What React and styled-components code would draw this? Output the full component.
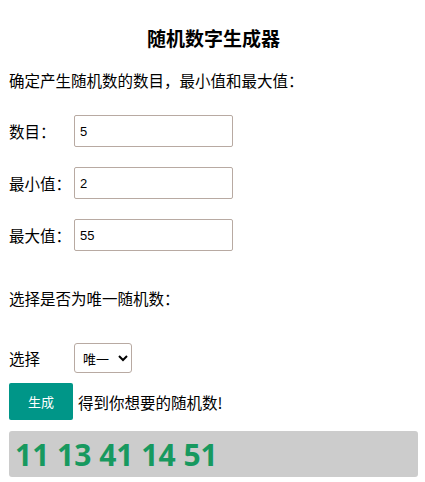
import React, {useState} from "react";
import styled, {createGlobalStyle} from 'styled-components'

const GlobalStyle = createGlobalStyle`
  body {
    margin: 0;
    background: #fff;
    font-family: "Noto Sans CJK SC", "Noto Sans", sans-serif;
    color: #000;
  }
`

const Page = styled.div`
  padding: 0 7px 4px 9px;
  display: flex;
  flex-direction: column;
`

const Title = styled.h3`
  margin: 24px 0 0;
  font-size: 19px;
  line-height: 28px;
  font-weight: 700;
  text-align: center;
`

const Text = styled.p`
  margin: ${p => p.$top}px 0 0;
  font-size: 15.5px;
  line-height: 18px;
`

const Row = styled.div`
  display: flex;
  align-items: center;
  margin-top: ${p => p.$top}px;
  height: ${p => p.$h || 32}px;
`

const Label = styled.label`
  width: 65px;
  font-size: 15.5px;
  line-height: 18px;
`

const Input = styled.input`
  box-sizing: border-box;
  width: 159px;
  height: 32px;
  border: 1px solid #b8aaa2;
  border-radius: 2px;
  padding: 0 5px;
  font-family: "Liberation Sans", Arial, sans-serif;
  font-size: 13px;
  outline: none;
`

const Select = styled.select`
  box-sizing: border-box;
  width: 58px;
  height: 30px;
  border: 1px solid #b8aaa2;
  border-radius: 3px;
  background: #fff;
  font-family: "Noto Sans CJK SC", sans-serif;
  font-size: 13px;
  padding: 0 4px;
`

const Button = styled.button`
  width: 64px;
  height: 37px;
  border: none;
  border-radius: 2px;
  background: #009688;
  color: #fff;
  font-family: "Noto Sans CJK SC", sans-serif;
  font-size: 13px;
  cursor: pointer;
  margin-right: 5px;
`

const Hint = styled.span`
  font-size: 15.5px;
`

const Result = styled.div`
  margin-top: 11px;
  height: 46px;
  background: #cccccc;
  border-radius: 3px;
  display: flex;
  align-items: center;
  padding-left: 6px;
  font-family: "Open Sans", sans-serif;
  font-weight: 700;
  font-size: 30px;
  color: #17995f;
`

export default function App() {
    const [count, setCount] = useState('5')
    const [min, setMin] = useState('2')
    const [max, setMax] = useState('55')
    const [unique, setUnique] = useState('unique')
    const [nums, setNums] = useState([11, 13, 41, 14, 51])

    const generate = () => {
        const n = parseInt(count) || 0
        const lo = parseInt(min) || 0
        const hi = parseInt(max) || 0
        const out = []
        let guard = 0
        while (out.length < n && guard < 10000) {
            guard++
            const v = lo + Math.floor(Math.random() * (hi - lo + 1))
            if (unique === 'unique' && out.includes(v)) continue
            out.push(v)
        }
        setNums(out)
    }

    return (
        <Page>
            <GlobalStyle/>
            <Title>随机数字生成器</Title>
            <Text $top={19}>确定产生随机数的数目，最小值和最大值：</Text>
            <Row $top={26}>
                <Label>数目：</Label>
                <Input value={count} onChange={e => setCount(e.target.value)}/>
            </Row>
            <Row $top={20}>
                <Label>最小值：</Label>
                <Input value={min} onChange={e => setMin(e.target.value)}/>
            </Row>
            <Row $top={20}>
                <Label>最大值：</Label>
                <Input value={max} onChange={e => setMax(e.target.value)}/>
            </Row>
            <Text $top={38}>选择是否为唯一随机数：</Text>
            <Row $top={36} $h={30}>
                <Label>选择</Label>
                <Select value={unique} onChange={e => setUnique(e.target.value)}>
                    <option value="unique">唯一</option>
                    <option value="repeat">可重复</option>
                </Select>
            </Row>
            <Row $top={10} $h={37}>
                <Button onClick={generate}>生成</Button>
                <Hint>得到你想要的随机数!</Hint>
            </Row>
            <Result>{nums.join(' ')}</Result>
        </Page>
    )
}
